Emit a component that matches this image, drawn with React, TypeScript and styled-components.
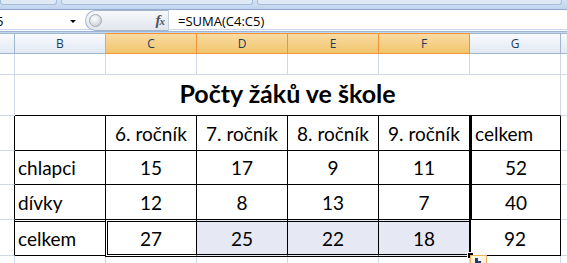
import { Fragment } from "react";
import styled, { createGlobalStyle } from "styled-components";

type Line = "grid" | "black" | "none";

const lineColor = (l: Line) =>
  l === "black" ? "#000" : l === "grid" ? "#d0d7e5" : "transparent";

const GlobalStyle = createGlobalStyle`
  body {
    margin: 0;
    background: #fff;
    overflow: hidden;
  }
`;

const Window = styled.div`
  width: 567px;
  height: 263px;
  overflow: hidden;
  display: flex;
  flex-direction: column;
`;

const Top = styled.div`
  height: 33px;
  background: #c4d7ef;
  display: flex;
  flex-direction: column;
`;

const RibbonEdge = styled.div`
  height: 9px;
  display: flex;
  gap: 4px;
  background: linear-gradient(#d3e2f4, #c2d5ee);
`;

const RibbonTab = styled.div<{ $w: number }>`
  width: ${(p) => p.$w}px;
  height: 4px;
  background: #dfe9f6;
  border: 1px solid #a4bedc;
  border-top: none;
  border-radius: 0 0 3px 3px;
`;

const FormulaBar = styled.div`
  height: 23px;
  box-sizing: border-box;
  display: flex;
  background: #fff;
  border-top: 1px solid #8fabd0;
  border-bottom: 1px solid #9bb4d6;
  box-shadow: inset 0 -1px 0 #fff, inset 0 -2px 0 #c8d6e8;
`;

const NameBox = styled.div`
  width: 82px;
  display: flex;
  align-items: center;
  justify-content: space-between;
  padding-right: 6px;
  box-sizing: border-box;
  overflow: hidden;
  font: 13px "Open Sans", sans-serif;
  color: #000;
`;

const NameText = styled.span`
  margin-left: -4px;
`;

const Arrow = styled.span`
  width: 0;
  height: 0;
  border-left: 3px solid transparent;
  border-right: 3px solid transparent;
  border-top: 3px solid #000;
  margin-top: 2px;
`;

const FxPill = styled.div`
  margin-left: 3px;
  width: 83px;
  display: flex;
  align-items: center;
  padding: 0 4px 0 3px;
  box-sizing: border-box;
  border: 1px solid #a5b6cc;
  border-right: none;
  border-radius: 11px 0 0 11px;
  background: linear-gradient(#f7f8fa, #e1e6ed);
`;

const Knob = styled.span`
  width: 11px;
  height: 11px;
  border-radius: 50%;
  border: 1px solid #a2abb6;
  background: radial-gradient(circle at 40% 35%, #fff 0%, #e3e6ea 45%, #b9bec6 100%);
`;

const Fx = styled.span`
  margin-left: auto;
  font: italic bold 15px "Liberation Serif", serif;
  color: #4d5561;
  letter-spacing: -1px;

  small {
    font-size: 11px;
  }
`;

const FormulaInput = styled.div`
  flex: 1;
  display: flex;
  align-items: center;
  padding-left: 9px;
  border-left: 1px solid #c3cfdf;
  font: 13px "Open Sans", sans-serif;
  color: #000;
`;

const Sheet = styled.div`
  height: 230px;
  display: grid;
  grid-template-columns: 15px repeat(6, 91px) 1fr;
  grid-template-rows: 21px 21px 41px 35px 34px 35px 36px 1fr;
  background: #fff;
`;

const ColHead = styled.div<{ $sel?: boolean; $last?: boolean }>`
  display: flex;
  align-items: center;
  justify-content: center;
  box-sizing: border-box;
  border-top: 1px solid ${(p) => (p.$sel ? "#f29436" : "#9eb6ce")};
  border-bottom: 1px solid ${(p) => (p.$sel ? "#f29436" : "#9eb6ce")};
  border-right: ${(p) => (p.$last ? "none" : `1px solid ${p.$sel ? "#f29436" : "#9eb6ce"}`)};
  background: ${(p) =>
    p.$sel
      ? "linear-gradient(#f9dba3, #f1c56c)"
      : "linear-gradient(#f8fafd, #e2e9f3)"};
  font: 12px "Open Sans", sans-serif;
  color: #213c5b;
`;

const Cell = styled.div<{
  $r?: Line;
  $b?: Line;
  $left?: boolean;
  $sel?: boolean;
  $thick?: boolean;
  $dbl?: boolean;
  $span?: number;
}>`
  display: flex;
  align-items: flex-end;
  justify-content: ${(p) => (p.$left ? "flex-start" : "center")};
  box-sizing: border-box;
  padding: 0 3px 7px;
  grid-column: span ${(p) => p.$span ?? 1};
  border-right: 1px solid ${(p) => lineColor(p.$r ?? "grid")};
  border-bottom: 1px solid ${(p) => lineColor(p.$b ?? "grid")};
  border-left: ${(p) => (p.$thick ? "2px solid #000" : "none")};
  background: ${(p) => (p.$sel ? "#e6e9f3" : "#fff")};
  box-shadow: ${(p) => (p.$dbl ? "inset 0 1px 0 #fff, inset 0 2px 0 #000" : "none")};
  font: 19px/1 "Lato", sans-serif;
  color: #000;
  white-space: nowrap;
  overflow: hidden;
`;

const Title = styled(Cell)`
  padding-bottom: 9px;
  font: bold 25px/1 "Lato", sans-serif;
`;

const Range = styled.div`
  grid-column: span 4;
  display: grid;
  grid-template-columns: repeat(4, 1fr);
  position: relative;
`;

const Selection = styled.div`
  position: absolute;
  inset: -1px -1px -1px -1px;
  z-index: 1;
  pointer-events: none;
  border: 3px double #000;
  border-right: 2px solid #000;
`;

const FillHandle = styled.span`
  position: absolute;
  right: -5px;
  bottom: -5px;
  width: 5px;
  height: 5px;
  background: #000;
  border: 1px solid #fff;
`;

const AutoFill = styled.span`
  position: absolute;
  left: calc(100% + 1px);
  top: calc(100% + 1px);
  width: 17px;
  height: 14px;
  box-sizing: border-box;
  border: 1px solid #f3b35a;
  background: linear-gradient(#fff8ea, #fde6b8);
  display: flex;
  padding: 2px 0 0 4px;
`;

const heads = ["", "B", "C", "D", "E", "F", "G", ""];
const grades = ["6. ročník", "7. ročník", "8. ročník", "9. ročník"];
const rows = [
  { label: "chlapci", values: [15, 17, 9, 11], total: 52 },
  { label: "dívky", values: [12, 8, 13, 7], total: 40 },
];
const totals = [27, 25, 22, 18];

function App() {
  return (
    <Window>
      <GlobalStyle />
      <Top>
        <RibbonEdge>
          <RibbonTab $w={55} />
          <RibbonTab $w={190} />
          <RibbonTab $w={303} />
        </RibbonEdge>
        <FormulaBar>
          <NameBox>
            <NameText>5</NameText>
            <Arrow />
          </NameBox>
          <FxPill>
            <Knob />
            <Fx>
              f<small>x</small>
            </Fx>
          </FxPill>
          <FormulaInput>=SUMA(C4:C5)</FormulaInput>
        </FormulaBar>
      </Top>

      <Sheet>
        {heads.map((h, i) => (
          <ColHead key={i} $sel={i >= 2 && i <= 5} $last={i === 7}>
            {h}
          </ColHead>
        ))}

        {/* row 1 */}
        {heads.map((_, i) => (
          <Cell key={"r1" + i} $r={i === 7 ? "none" : "grid"} />
        ))}

        {/* row 2 - title */}
        <Cell />
        <Title $span={6} $b="black">
          Počty žáků ve škole
        </Title>
        <Cell $r="none" />

        {/* row 3 - header */}
        <Cell $r="black" />
        <Cell $r="black" $b="black" />
        {grades.map((g) => (
          <Cell key={g} $r="black" $b="black">
            {g}
          </Cell>
        ))}
        <Cell $r="black" $b="black" $thick $left>
          celkem
        </Cell>
        <Cell $r="none" />

        {/* rows 4, 5 */}
        {rows.map((row) => (
          <Fragment key={row.label}>
            <Cell $r="black" />
            <Cell $r="black" $b="black" $left>
              {row.label}
            </Cell>
            {row.values.map((v, i) => (
              <Cell key={i} $r="black" $b="black">
                {v}
              </Cell>
            ))}
            <Cell $r="black" $b="black" $thick>
              {row.total}
            </Cell>
            <Cell $r="none" />
          </Fragment>
        ))}

        {/* row 6 - totals, C6:F6 selected */}
        <Cell $r="black" />
        <Cell $r="black" $b="black" $dbl $left>
          celkem
        </Cell>
        <Range>
          {totals.map((v, i) => (
            <Cell key={i} $r="black" $b="none" $sel={i > 0}>
              {v}
            </Cell>
          ))}
          <Selection>
            <FillHandle />
            <AutoFill>
              <svg width="6" height="6" viewBox="0 0 6 6">
                <rect width="6" height="6" fill="#1f3b7a" />
                <rect x="3" y="0" width="3" height="3" fill="#fff" />
              </svg>
            </AutoFill>
          </Selection>
        </Range>
        <Cell $r="black" $b="black">
          92
        </Cell>
        <Cell $r="none" />

        {/* row 7 */}
        {heads.map((_, i) => (
          <Cell key={"r7" + i} $r={i === 7 ? "none" : "grid"} $b="none" />
        ))}
      </Sheet>
    </Window>
  );
}

export default App;
